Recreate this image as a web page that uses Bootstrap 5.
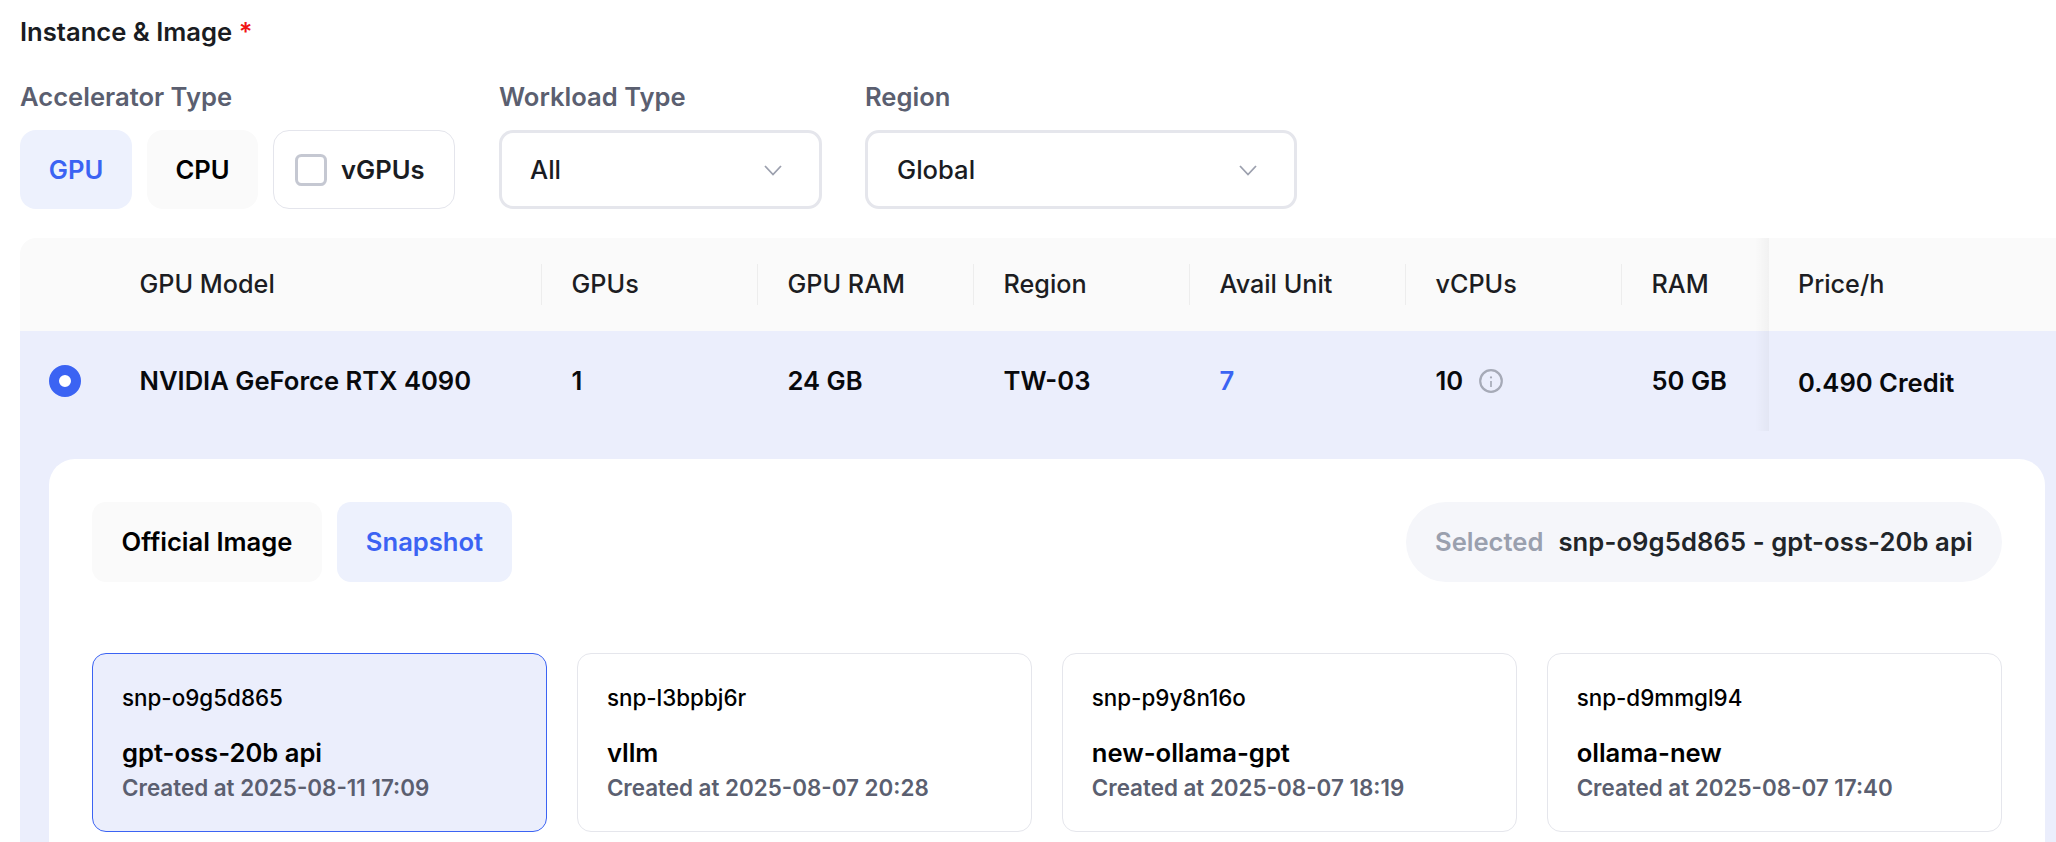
<!DOCTYPE html>
<html lang="en">
<head>
<meta charset="utf-8">
<title>Instance &amp; Image</title>
<link rel="stylesheet" href="https://cdn.jsdelivr.net/npm/bootstrap@5.3.0/dist/css/bootstrap.min.css">
<style>
html,body{height:842px;overflow:hidden;background:#fff;}
body{font-family:Inter,"Liberation Sans",sans-serif;color:#000;}
.page-wrap{padding:21px 0 0 20px;width:2056px;}
.sec-title{font-size:25.6px;font-weight:600;line-height:22px;color:#1a1c22;margin-bottom:42px;}
.req{color:#f01515;}
.filter-label{font-size:25.6px;font-weight:600;line-height:24px;color:#5b5f70;margin-bottom:21px;}
.opt-btn{height:79px;border-radius:16px;font-size:25.6px;font-weight:600;border:0;padding:1px 0 0;display:flex;align-items:center;justify-content:center;}
.opt-gpu{width:112px;background:#edf1fd;color:#3b63f3;}
.opt-cpu{width:111px;background:#fafafa;color:#000;}
.opt-vgpu{width:182px;background:#fff;color:#1a1c22;border:1px solid #e4e5ec;gap:14px;justify-content:flex-start;padding-left:21px;}
.vgpu-box{width:32px;height:32px;margin:0;border:3px solid #c5c8d2;border-radius:6px;background:#fff;float:none!important;}
.sel-box{height:79px;border:3px solid #e5e6ec;border-radius:14px;font-size:25.6px;font-weight:500;padding:1px 37px 0 28px;background:#fff;color:#1a1c22;}
.sel-work{width:323px;}
.sel-region{width:432px;padding-left:29px;}
.tbl-wrap{margin-top:29px;overflow:hidden;border-top-left-radius:16px;}
.gpu-tbl{table-layout:fixed;width:2036px;margin:0;border-collapse:separate;border-spacing:0;}
.gpu-tbl th,.gpu-tbl td{border:0;padding:0;box-shadow:none;vertical-align:middle;}
.gpu-tbl thead th{background:#fafafa;height:93px;font-size:25.2px;font-weight:500;color:#1c1d22;}
.head-sep{display:flex;align-items:center;height:41px;padding-left:29.5px;border-left:1.5px solid #ededed;}
.head-first{padding-left:0;border-left:0;}
.gpu-tbl tbody td{background:#ebeefc;}
.gpu-tbl .main-row td{height:100px;font-size:25.6px;font-weight:600;color:#08090c;}
.gpu-tbl .main-row .val-cell{padding-left:30.5px;}
.gpu-tbl .price-col{position:relative;padding-left:29px;}
.gpu-tbl .price-col::before{content:"";position:absolute;top:0;bottom:0;left:-14px;width:14px;background:linear-gradient(to right,rgba(0,0,0,0),rgba(0,0,0,.035));}
.gpu-tbl .main-row .price-cell{padding-top:5px;}
.radio-dot{display:block;width:32px;height:32px;margin-left:29px;border-radius:50%;border:10px solid #3b63f3;background:#fff;}
.gpu-tbl .main-row .avail{color:#3b63f3;}
.info-ic{width:24px;height:24px;margin-left:16px;vertical-align:-3px;}
.gpu-tbl .expand-cell{padding:28px 11px 0 29px;}
.img-panel{background:#fff;border-radius:26px 26px 0 0;padding:43px 43px 12px;}
.tab-btn{height:80px;border:0;border-radius:14px;font-size:25.6px;font-weight:600;padding:0;}
.tab-off{width:230px;background:#fafafa;color:#000;}
.tab-on{width:175px;background:#edf1fd;color:#3b63f3;}
.sel-pill{height:80px;width:596px;border-radius:40px;background:#f5f6fa;font-size:25.6px;font-weight:600;padding-left:29px;gap:15px;}
.sel-val{letter-spacing:.1px;}
.sel-lab{color:#9aa0ae;}
.snap-grid{display:grid;grid-template-columns:repeat(4,1fr);gap:29.5px;margin-top:71px;}
.snap-card{height:179px;border:1.5px solid #e5e6ec;border-radius:14px;background:#fff;padding:31.5px 29px 0;}
.snap-grid .snap-on{background:#ebeefc;border-color:#3b63f3;}
.snap-id{font-size:22.4px;font-weight:500;line-height:24px;color:#000;}
.snap-name{font-size:25.6px;font-weight:600;line-height:32px;margin-top:27px;color:#000;}
.snap-date{font-size:22.4px;font-weight:600;line-height:24px;margin-top:7px;color:#5b5f70;}
</style>
</head>
<body>
<div class="page-wrap">
  <div class="sec-title">Instance &amp; Image <span class="req">*</span></div>
  <div class="d-flex">
    <div>
      <div class="filter-label">Accelerator Type</div>
      <div class="d-flex" style="gap:15px">
        <button type="button" class="btn opt-btn opt-gpu">GPU</button>
        <button type="button" class="btn opt-btn opt-cpu">CPU</button>
        <label class="opt-btn opt-vgpu"><input class="form-check-input vgpu-box" type="checkbox">vGPUs</label>
      </div>
    </div>
    <div style="margin-left:44px">
      <div class="filter-label">Workload Type</div>
      <div class="sel-box sel-work d-flex align-items-center justify-content-between"><span>All</span>
        <svg width="18" height="11" viewBox="0 0 18 11" fill="none" stroke="#9ca0ae" stroke-width="1.8"><path d="M1 1l8 8.5L17 1"/></svg>
      </div>
    </div>
    <div style="margin-left:43px">
      <div class="filter-label">Region</div>
      <div class="sel-box sel-region d-flex align-items-center justify-content-between"><span>Global</span>
        <svg width="18" height="11" viewBox="0 0 18 11" fill="none" stroke="#9ca0ae" stroke-width="1.8"><path d="M1 1l8 8.5L17 1"/></svg>
      </div>
    </div>
  </div>
  <div class="tbl-wrap">
    <table class="table gpu-tbl">
      <colgroup><col style="width:119.5px"><col style="width:401.5px"><col style="width:216px"><col style="width:216px"><col style="width:216px"><col style="width:216px"><col style="width:216px"><col style="width:148px"><col></colgroup>
      <thead>
        <tr>
          <th></th>
          <th><div class="head-sep head-first">GPU Model</div></th>
          <th><div class="head-sep">GPUs</div></th>
          <th><div class="head-sep">GPU RAM</div></th>
          <th><div class="head-sep">Region</div></th>
          <th><div class="head-sep">Avail Unit</div></th>
          <th><div class="head-sep">vCPUs</div></th>
          <th><div class="head-sep">RAM</div></th>
          <th class="price-col">Price/h</th>
        </tr>
      </thead>
      <tbody>
        <tr class="main-row">
          <td><span class="radio-dot"></span></td>
          <td>NVIDIA GeForce RTX 4090</td>
          <td class="val-cell">1</td>
          <td class="val-cell">24 GB</td>
          <td class="val-cell">TW-03</td>
          <td class="val-cell avail">7</td>
          <td class="val-cell">10<svg class="info-ic" viewBox="0 0 24 24" fill="none" stroke="#a6aab7" stroke-width="2.2"><circle cx="12" cy="12" r="10.8"/><path d="M12 12v6" stroke-width="1.7"/><circle cx="12" cy="8.4" r="1.1" fill="#a6aab7" stroke="none"/></svg></td>
          <td class="val-cell">50 GB</td>
          <td class="price-col price-cell">0.490 Credit</td>
        </tr>
        <tr>
          <td colspan="9" class="expand-cell">
            <div class="img-panel">
              <div class="d-flex justify-content-between">
                <div class="d-flex" style="gap:15px">
                  <button type="button" class="btn tab-btn tab-off">Official Image</button>
                  <button type="button" class="btn tab-btn tab-on">Snapshot</button>
                </div>
                <div class="sel-pill d-flex align-items-center"><span class="sel-lab">Selected</span><span class="sel-val">snp-o9g5d865 - gpt-oss-20b api</span></div>
              </div>
              <div class="snap-grid">
                <div class="snap-card snap-on"><div class="snap-id">snp-o9g5d865</div><div class="snap-name">gpt-oss-20b api</div><div class="snap-date">Created at 2025-08-11 17:09</div></div>
                <div class="snap-card"><div class="snap-id">snp-l3bpbj6r</div><div class="snap-name">vllm</div><div class="snap-date">Created at 2025-08-07 20:28</div></div>
                <div class="snap-card"><div class="snap-id">snp-p9y8n16o</div><div class="snap-name">new-ollama-gpt</div><div class="snap-date">Created at 2025-08-07 18:19</div></div>
                <div class="snap-card"><div class="snap-id">snp-d9mmgl94</div><div class="snap-name">ollama-new</div><div class="snap-date">Created at 2025-08-07 17:40</div></div>
              </div>
            </div>
          </td>
        </tr>
      </tbody>
    </table>
  </div>
</div>
</body>
</html>
